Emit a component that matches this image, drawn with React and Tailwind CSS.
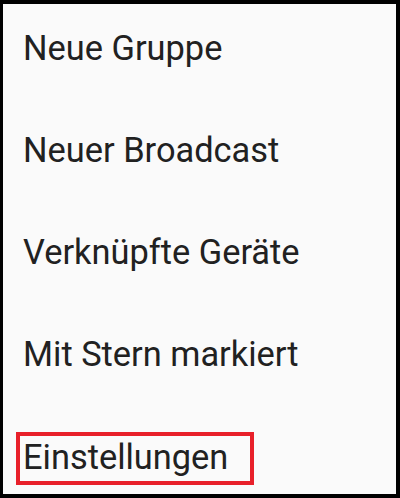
export default function App() {
  const items = ["Neue Gruppe", "Neuer Broadcast", "Verknüpfte Geräte", "Mit Stern markiert"];

  return (
    <div className="w-[400px] h-[498px] bg-[#fafafa] border-black border-t-4 border-l-[3px] border-r-4 border-b-4 overflow-hidden">
      <ul
        className="flex flex-col gap-[62.3px] pt-[23.5px] pl-5 text-[34.4px] leading-[40px] text-[#212121]"
        style={{ fontFamily: "Roboto, 'Noto Sans', sans-serif" }}
      >
        {items.map((label) => (
          <li key={label}>{label}</li>
        ))}
        <li className="self-start -mt-[5px] -ml-[7px] border-4 border-[#e8202a] pl-[3px] pr-[22px] pt-[1px] pb-[4px]">
          Einstellungen
        </li>
      </ul>
    </div>
  );
}
